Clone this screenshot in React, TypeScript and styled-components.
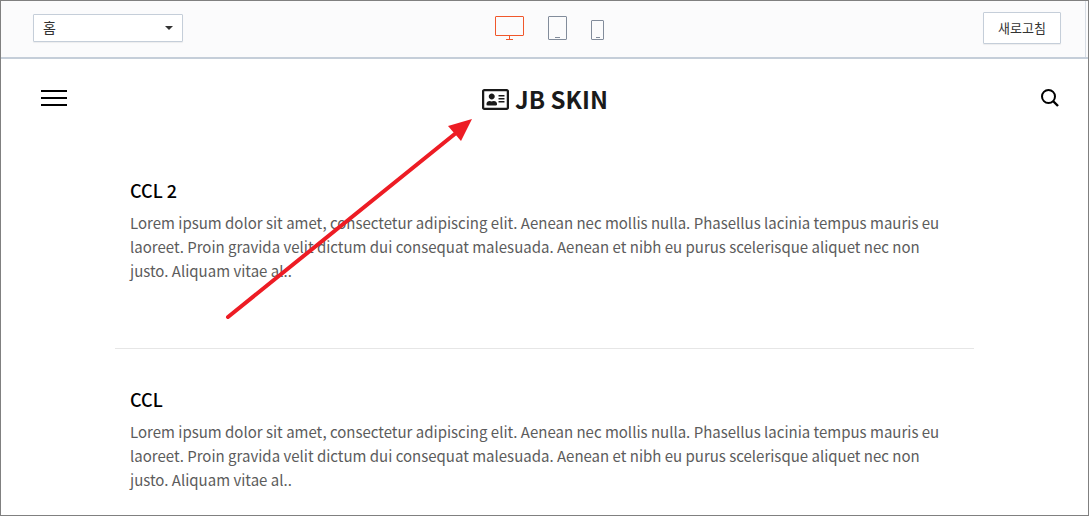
import React from "react";
import styled, { createGlobalStyle } from "styled-components";
import { FaRegAddressCard } from "react-icons/fa";

const GlobalStyle = createGlobalStyle`
  *, *::before, *::after { box-sizing: border-box; }
  body {
    margin: 0;
    background: #fff;
    font-family: "Noto Sans CJK KR", "Noto Sans", sans-serif;
    font-size: 15px;
    line-height: 24px;
  }
  button, select { font-family: inherit; }
`;

const Frame = styled.div`
  position: relative;
  min-height: 100vh;
  border: 1px solid #808080;
  overflow: hidden;
`;

const ToolbarShell = styled.div`
  background: #fbfbfc;
  border-bottom: 2px solid #c5ced9;
`;

const Toolbar = styled.div`
  display: grid;
  grid-template-columns: 1fr auto 1fr;
  align-items: center;
  height: 56px;
  padding: 0 24px 2px 32px;
  margin-right: 2px;
  border-right: 1px solid #d8dde4;
`;

const SelectBox = styled.label`
  position: relative;
  width: 150px;
  height: 28px;
  svg {
    position: absolute;
    right: 10px;
    top: 12px;
    pointer-events: none;
  }
`;

const Select = styled.select`
  display: block;
  appearance: none;
  width: 100%;
  height: 28px;
  padding: 0 24px 2px 9px;
  border: 1px solid #c5ced9;
  border-radius: 1px;
  background: #fff;
  box-shadow: 0 1px 1px rgba(0, 0, 0, 0.06);
  color: #333;
  font-size: 14px;
`;

const Devices = styled.div`
  display: flex;
  align-items: flex-end;
  gap: 24px;
  padding-left: 4px;
`;

const IconButton = styled.button<{ $color?: string }>`
  display: block;
  padding: 0;
  border: 0;
  background: none;
  color: ${(p) => p.$color ?? "#000"};
  cursor: pointer;
  svg { display: block; }
`;

const RefreshButton = styled.button`
  justify-self: end;
  width: 78px;
  height: 32px;
  padding: 0 0 2px;
  border: 1px solid #c5ced9;
  border-radius: 1px;
  background: #fff;
  box-shadow: 0 1px 1px rgba(0, 0, 0, 0.06);
  color: #333;
  font-size: 13px;
  white-space: nowrap;
`;

const SiteHeader = styled.header`
  display: grid;
  grid-template-columns: 1fr auto 1fr;
  align-items: center;
  height: 78px;
  padding: 0 29px 0 40px;
  > :last-child { justify-self: end; }
`;

const Logo = styled.a`
  display: flex;
  align-items: center;
  gap: 6px;
  padding-top: 2px;
  padding-right: 10px;
  color: #1a1a1a;
  font-size: 24px;
  font-weight: 700;
  line-height: 36px;
  text-decoration: none;
`;

const Posts = styled.main`
  max-width: 859px;
  margin: 0 auto;
  padding-top: 3px;
`;

const Post = styled.article`
  padding: 38px 15px 65px;
  border-bottom: 1px solid #e6e6e6;
  &:last-child {
    padding-bottom: 20px;
    border-bottom: 0;
  }
`;

const PostTitle = styled.h2`
  margin: 0 0 9px;
  color: #000;
  font-size: 18px;
  font-weight: 500;
  line-height: 24px;
`;

const Excerpt = styled.p`
  margin: 0;
  color: #5c5c5c;
`;

const Pointer = styled.svg`
  position: absolute;
  left: 50%;
  top: 0;
  margin-left: -544px;
  pointer-events: none;
`;

const excerpt =
  "Lorem ipsum dolor sit amet, consectetur adipiscing elit. Aenean nec mollis nulla. Phasellus lacinia tempus mauris eu laoreet. Proin gravida velit dictum dui consequat malesuada. Aenean et nibh eu purus scelerisque aliquet nec non justo. Aliquam vitae al..";

const posts = [{ title: "CCL 2" }, { title: "CCL" }];

export default function App() {
  return (
    <>
      <GlobalStyle />
      <Frame>
        <ToolbarShell>
          <Toolbar>
            <SelectBox>
              <Select aria-label="페이지" defaultValue="home">
                <option value="home">홈</option>
              </Select>
              <svg width="8" height="4" viewBox="0 0 8 4" aria-hidden="true">
                <path d="M0 0h8L4 4z" fill="#333" />
              </svg>
            </SelectBox>
            <Devices>
              <IconButton $color="#f0572b" aria-label="데스크톱">
                <svg width="29" height="25" viewBox="0 0 29 25" fill="none" stroke="currentColor">
                  <rect x="0.5" y="0.5" width="28" height="19" rx="0.5" />
                  <path d="M14.5 20v3.500M11 23.500h7" />
                </svg>
              </IconButton>
              <IconButton $color="#828c9b" aria-label="태블릿">
                <svg width="19" height="25" viewBox="0 0 19 25" fill="none" stroke="currentColor">
                  <rect x="0.5" y="0.5" width="18" height="23" rx="0.5" />
                  <path d="M7 21.500h5" />
                </svg>
              </IconButton>
              <IconButton $color="#828c9b" aria-label="휴대폰">
                <svg width="13" height="21" viewBox="0 0 13 21" fill="none" stroke="currentColor">
                  <rect x="0.5" y="0.5" width="12" height="19" rx="0.5" />
                  <path d="M5 17.500h4" />
                </svg>
              </IconButton>
            </Devices>
            <RefreshButton>새로고침</RefreshButton>
          </Toolbar>
        </ToolbarShell>

        <SiteHeader>
          <IconButton aria-label="메뉴">
            <svg width="26" height="16" viewBox="0 0 26 16" fill="currentColor">
              <path d="M0 0h26v2H0zM0 7h26v2H0zM0 14h26v2H0z" />
            </svg>
          </IconButton>
          <Logo href="#">
            <FaRegAddressCard size={27} aria-hidden="true" />
            JB SKIN
          </Logo>
          <IconButton aria-label="검색">
            <svg width="18" height="18" viewBox="0 0 18 18" fill="none" stroke="currentColor" strokeWidth="2">
              <circle cx="7.500" cy="7.500" r="6.500" />
              <path d="M12 12l5 5" strokeWidth="2.400" />
            </svg>
          </IconButton>
        </SiteHeader>

        <Posts>
          {posts.map((post) => (
            <Post key={post.title}>
              <PostTitle>{post.title}</PostTitle>
              <Excerpt>{excerpt}</Excerpt>
            </Post>
          ))}
        </Posts>

        <Pointer width="500" height="340" viewBox="0 0 500 340" aria-hidden="true">
          <path d="M227 316L455 132" stroke="#ed1c24" strokeWidth="4" strokeLinecap="round" />
          <path d="M471 118L447 125L460 140z" fill="#ed1c24" />
        </Pointer>
      </Frame>
    </>
  );
}
